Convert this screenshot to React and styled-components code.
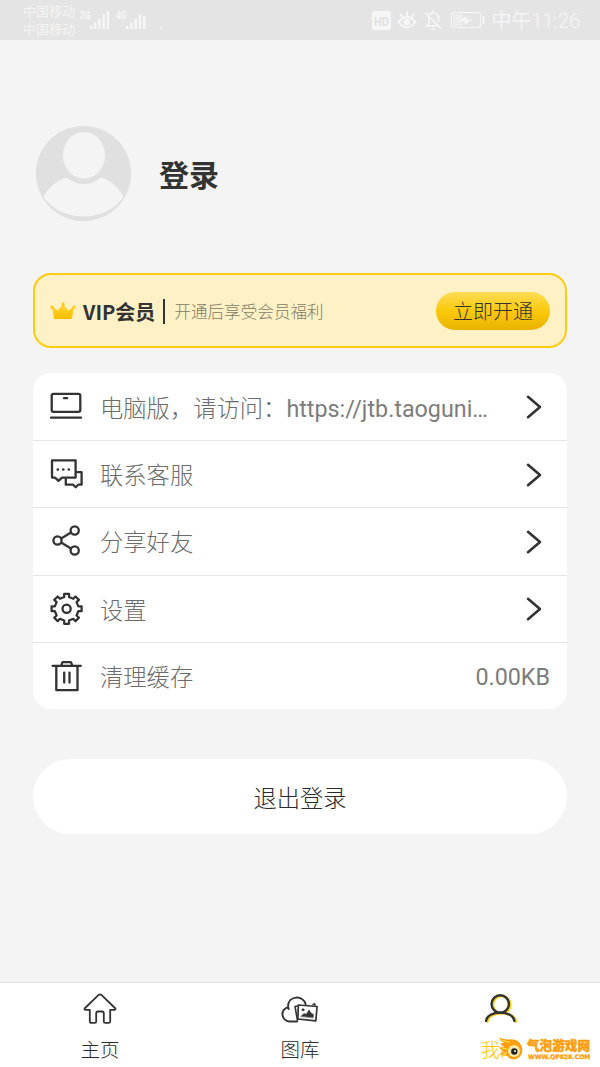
import React from "react";
import styled, { createGlobalStyle } from "styled-components";

const GlobalStyle = createGlobalStyle`
  * {
    box-sizing: border-box;
  }
  body {
    margin: 0;
    background: #f4f4f4;
    font-family: Roboto, "Noto Sans CJK SC", sans-serif;
    color: #333;
  }
`;

const Screen = styled.div`
  position: relative;
  display: flex;
  flex-direction: column;
  width: 600px;
  height: 1067px;
  overflow: hidden;
  background: #f4f4f4;
`;

const StatusBar = styled.header`
  display: flex;
  justify-content: space-between;
  height: 40px;
  padding: 0 20px 0 23px;
  background: #e4e4e4;
  color: #f6f6f6;
`;

const StatusGroup = styled.div`
  display: flex;
  align-items: center;
`;

const Carriers = styled.div`
  width: 57px;
  padding-top: 2px;
  font-size: 13px;
  font-weight: 350;
  line-height: 18px;
  white-space: nowrap;
`;

const Clock = styled.span`
  margin: 2px 0 0 5px;
  font-size: 20px;
  font-weight: 350;
  line-height: 40px;
  white-space: nowrap;
`;

const Content = styled.main`
  display: flex;
  flex: 1;
  flex-direction: column;
  padding: 85px 33px 0;
`;

const Profile = styled.section`
  display: flex;
  align-items: center;
  gap: 27px;
  height: 97px;
  padding-left: 2px;
`;

const LoginTitle = styled.h1`
  margin: 4px 0 0;
  font-size: 30px;
  font-weight: 700;
  line-height: 40px;
`;

const VipBanner = styled.section`
  display: flex;
  align-items: center;
  height: 75px;
  margin-top: 51px;
  padding: 1px 15px 0;
  border: 2px solid #fccb14;
  border-radius: 18px;
  background: #fff1c6;
`;

const VipName = styled.strong`
  margin: 1px 0 0 7px;
  font-family: "Noto Sans CJK SC", sans-serif;
  font-size: 20px;
  line-height: 28px;
  white-space: nowrap;
`;

const VipDivider = styled.span`
  width: 2px;
  height: 25px;
  margin: 0 9px 0 8px;
  background: #333;
`;

const VipHint = styled.span`
  flex: 1;
  margin-top: 3px;
  color: #827b64;
  font-size: 16.6px;
  font-weight: 300;
  line-height: 24px;
`;

const VipButton = styled.button`
  width: 114px;
  height: 38px;
  padding: 3px 0 0;
  border: none;
  border-radius: 19px;
  background: linear-gradient(#ffdc55, #fbc90b 50%, #e9b300);
  color: #333;
  font-family: inherit;
  font-size: 20px;
  font-weight: 300;
  line-height: 35px;
`;

const Menu = styled.ul`
  margin: 25px 0 0;
  padding: 0;
  overflow: hidden;
  border-radius: 18px;
  background: #fff;
  list-style: none;
`;

const MenuRow = styled.li`
  display: flex;
  align-items: center;
  height: 67.2px;
  padding: 0 17px 0 15px;

  & + & {
    border-top: 1px solid #e6e6e6;
  }
`;

const MenuLabel = styled.span`
  flex: 1;
  margin: 4px 0 0 16px;
  color: #6c6c6c;
  font-size: 23.3px;
  font-weight: 300;
  line-height: 34px;
  white-space: nowrap;
`;

const Latin = styled.span`
  color: #7c7c7c;
  font-weight: 400;
`;

const ChevronBox = styled.span`
  display: flex;
  margin: 1px 8px 0 0;
`;

const Value = styled.span`
  margin-top: 2px;
  color: #7c7c7c;
  font-size: 23.3px;
`;

const LogoutButton = styled.button`
  height: 75px;
  margin-top: 50px;
  padding: 2px 0 0;
  border: none;
  border-radius: 38px;
  background: #fff;
  color: #2b2b2b;
  font-family: inherit;
  font-size: 23.3px;
  font-weight: 300;
`;

const TabBar = styled.nav`
  display: grid;
  grid-template-columns: repeat(3, 1fr);
  height: 85px;
  border-top: 1px solid #e2e2e2;
  background: #fff;
`;

const Tab = styled.a`
  display: flex;
  flex-direction: column;
  align-items: center;
  padding-top: 7px;
  color: ${({ $active }) => ($active ? "#fcc800" : "#2b2b2b")};
  font-size: 19.5px;
  font-weight: 300;
  line-height: 28px;
`;

const TabLabel = styled.span`
  margin-top: 11px;
`;

// floats over the bottom right corner of the tab bar
const SiteBadge = styled.div`
  position: absolute;
  right: 9px;
  bottom: 6px;
  display: flex;
  align-items: center;
  color: #ff9d0a;
`;

const SiteText = styled.div`
  width: 64px;
  margin-left: 2px;
`;

const SiteName = styled.div`
  font-size: 12.6px;
  font-weight: 900;
  line-height: 15px;
  white-space: nowrap;
  -webkit-text-stroke: 0.4px #ff9d0a;
`;

const SiteUrl = styled.div`
  width: max-content;
  margin-left: 1px;
  font-family: "DejaVu Sans", sans-serif;
  font-size: 6.1px;
  font-weight: 700;
  line-height: 8px;
  white-space: nowrap;
  -webkit-text-stroke: 0.3px #ff9d0a;
`;

const Line = styled.svg`
  flex: none;
  fill: none;
  stroke: #333;
  stroke-width: ${({ $weight }) => $weight || 2.3};
  stroke-linecap: round;
  stroke-linejoin: round;
`;

const Solid = styled.svg`
  flex: none;
`;

const Icon = ({ children, ...rest }) => (
  <Line width="36" height="36" viewBox="0 0 36 36" {...rest}>
    {children}
  </Line>
);

const LaptopIcon = () => (
  <Icon>
    <rect x="3.7" y="4.8" width="28.6" height="18" rx="1.8" />
    <path d="M16 9.2h3.2M3 28.7h30" />
  </Icon>
);

const ChatIcon = () => (
  <Icon>
    <path d="M4 4.3h23.6v17.3H14l-3.5 3.3L7 21.6H4z" />
    <path d="M28 16.2h5.6v12.5h-3.4l-2.5 2.5-2.5-2.5h-7.4V23" />
    <path d="M9.7 13.5h.2M15.2 13.5h.2M20.7 13.5h.2" strokeWidth="2.5" />
  </Icon>
);

const ShareIcon = () => (
  <Icon>
    <circle cx="26.7" cy="7.5" r="4.1" />
    <circle cx="9.5" cy="17.5" r="4.1" />
    <circle cx="26.7" cy="27.5" r="4.1" />
    <path d="M13.1 15.4l9.900-5.8M13.1 19.6l9.900 5.8" />
  </Icon>
);

// eight teeth, each one given as [angle shift, radius] corners
const gearPoints = () => {
  const tooth = [[-0.2, 12], [-0.16, 15.2], [0.16, 15.2], [0.2, 12]];
  const points = [];
  for (let i = 0; i < 8; i += 1) {
    tooth.forEach(([shift, radius]) => {
      const angle = (i * Math.PI) / 4 + shift;
      points.push(
        `${(18.6 + radius * Math.sin(angle)).toFixed(2)},${(
          17.8 -
          radius * Math.cos(angle)
        ).toFixed(2)}`
      );
    });
  }
  return points.join(" ");
};

const GearIcon = () => (
  <Icon>
    <polygon points={gearPoints()} />
    <circle cx="18.6" cy="17.8" r="4.1" />
  </Icon>
);

const TrashIcon = () => (
  <Icon>
    <path d="M4.6 7.8h28.2M8.3 8v24.2h21.2V8M13.3 7.5l1.2-3.3h8.4l1.4 3.3M16.2 14.6v10M21.5 14.6v10" />
  </Icon>
);

const Chevron = () => (
  <Line width="16" height="26" viewBox="0 0 16 26" $weight={2.6}>
    <path d="M2 2.8L14 13 2 23.2" />
  </Line>
);

const HomeIcon = () => (
  <Icon $weight={1.8}>
    <path d="M16.6 4.9q1.4-1 2.8 0L33.4 18.5q.3 1.3-1 1.4h-4.2v11.6q0 1.4-1.5 1.4h-3.5q-1.4 0-1.4-1.4v-8q0-2-1.6-2h-4.4q-1.6 0-1.6 2v8q0 1.4-1.4 1.4H9.3q-1.5 0-1.5-1.4V19.9H3.6q-1.3-.1-1-1.4z" />
  </Icon>
);

const GalleryIcon = () => (
  <Line width="40" height="36" viewBox="0 0 40 36" $weight={1.9}>
    <path d="M17 31.5H9.300a7.300 7.300 0 0 1-1.200-14.400C7.500 5 23.500 4.800 25.700 14.200M8.100 17.100l.5 2" />
    <path d="M17.500 30.500L15 16.500l2.500-.5M33 14.600l1.500-.8.5 1.200" strokeWidth="1.6" />
    <path d="M18.300 15l18.800 1.500-1.300 14.300-17.900-1.800z" fill="#fff" strokeWidth="1.7" />
    <path d="M21 26.300l3-2.800 2.200.7 2.800-4.300 2.300 3.400 2.200 1.100-.4 3.200z" fill="#333" strokeWidth=".5" />
    <circle cx="23" cy="19.8" r="1" fill="#333" strokeWidth="1" />
  </Line>
);

const MineIcon = () => (
  <Icon $weight={2.4}>
    <g stroke="#fccb14" transform="translate(1.5 .7)">
      <circle cx="18.2" cy="14" r="8.7" />
      <path d="M4 31c.8-11.2 27.6-11.2 28.4 0" />
    </g>
    <circle cx="18.2" cy="14" r="8.7" />
    <path d="M4 31c.8-11.2 27.6-11.2 28.4 0" />
  </Icon>
);

const Avatar = () => (
  <Solid width="97" height="97" viewBox="0 0 97 97">
    <circle cx="48.5" cy="48.5" r="47.6" fill="#e0e0e0" />
    <ellipse cx="49" cy="30.3" rx="21" ry="23.3" fill="#f4f4f4" />
    <path
      d="M8.5 72C12 64 22 55 31.5 52.5Q49 66 66 52.5C76 55 85 64 88.5 72C70 98 27 98 8.5 72z"
      fill="#f4f4f4"
    />
  </Solid>
);

const Crown = () => (
  <Solid width="26" height="18" viewBox="0 0 26 18">
    <defs>
      <linearGradient id="crown" x1="0" y1="0" x2="0" y2="1">
        <stop offset="0" stopColor="#ffd83c" />
        <stop offset="1" stopColor="#fbbd00" />
      </linearGradient>
    </defs>
    <g fill="url(#crown)">
      <path d="M2 5l6 3.2L13 2l5 6.2L24 5l-2 11.2q-.2.8-1 .8H5q-.8 0-1-.8z" />
      <circle cx="2" cy="5" r="1.7" />
      <circle cx="13" cy="2" r="1.7" />
      <circle cx="24" cy="5" r="1.7" />
    </g>
  </Solid>
);

const SignalIcons = () => (
  <Solid width="90" height="40" viewBox="0 0 90 40" fill="#f6f6f6">
    <text x="0" y="19" fontSize="11.5" fontWeight="700" textLength="10.5" lengthAdjust="spacingAndGlyphs">
      2G
    </text>
    <path d="M10 26h2.5v3H10zM14 22.5h2.5V29H14zM18.2 18.5h2.5V29h-2.5zM22.5 14.5H25V29h-2.5zM26.7 11h2.5v18h-2.5z" />
    <text x="36" y="19" fontSize="11.5" fontWeight="700" textLength="10.5" lengthAdjust="spacingAndGlyphs">
      4G
    </text>
    <path d="M46 26h2.5v3H46zM50.2 22.5h2.5V29h-2.5zM54.5 18.5H57V29h-2.5zM58.8 14.5h2.5V29h-2.5zM63 16h2.5v13H63zM80 27h2v1.5h-2z" />
  </Solid>
);

const SystemIcons = () => (
  <Solid width="114" height="40" viewBox="0 0 114 40" fill="none" stroke="#f6f6f6" strokeWidth="2" strokeLinecap="round">
    <rect x="0" y="11" width="19" height="19" rx="2.5" fill="#f6f6f6" stroke="none" />
    <text x="2" y="25.5" fontSize="13.5" fontWeight="700" fill="#e0e0e0" stroke="none" textLength="15" lengthAdjust="spacingAndGlyphs">
      HD
    </text>
    <path d="M26.5 22q8.5-10 17 0-8.5 11-17 0zM35 12.5v3M28.5 14.5l1.5 2M41.5 14.5l-1.5 2" />
    <circle cx="35" cy="22" r="3.2" fill="#f6f6f6" stroke="none" />
    <path d="M53.5 13l15 15M57 17v6.5L54.5 26H64M57.5 14.5q5-4.5 9 2V21M61 11.5v1M60 29h2" strokeWidth="1.7" />
    <rect x="79.5" y="12.5" width="29" height="15" rx="2" strokeWidth="1.2" />
    <path d="M81 14h10v12H81z" fill="#ededed" stroke="none" />
    <path d="M86 20.5l9-4.5-1 3.5h7L92 25l1-4zM110.5 16h2v8h-2z" fill="#f6f6f6" stroke="none" />
  </Solid>
);

const Mascot = () => (
  <Solid width="27" height="24" viewBox="0 0 27 24">
    <path
      d="M1 .5q5 2.6 12 1.8Q21 2.5 23.5 9q2.5 6.5-2 11-4 3.5-8.5 2-3-1.5-5-4.5L1 17.5 5.5 14.5.5 10.5l6-.2L2 6H6Q2.5 4 1 .5z"
      fill="#ff9d0a"
    />
    <path d="M4 3.5l8 2M4 11.5l5 .5M5 16l4-.5" stroke="#ffd43a" strokeWidth="1.3" />
    <circle cx="16" cy="14" r="6" fill="#ffe9a8" />
    <circle cx="16.3" cy="14.5" r="3.2" fill="#222" />
    <circle cx="17" cy="14" r="1" fill="#fff" />
  </Solid>
);

const links = [
  { icon: LaptopIcon, label: "电脑版，请访问：", url: "https://jtb.taoguni…" },
  { icon: ChatIcon, label: "联系客服" },
  { icon: ShareIcon, label: "分享好友" },
  { icon: GearIcon, label: "设置" },
  { icon: TrashIcon, label: "清理缓存", value: "0.00KB" }
];

const tabs = [
  { icon: HomeIcon, label: "主页" },
  { icon: GalleryIcon, label: "图库" },
  { icon: MineIcon, label: "我的", active: true }
];

const MenuItem = ({ icon: ItemIcon, label, url, value }) => (
  <MenuRow>
    <ItemIcon />
    <MenuLabel>
      {label}
      {url && <Latin>{url}</Latin>}
    </MenuLabel>
    {value ? (
      <Value>{value}</Value>
    ) : (
      <ChevronBox>
        <Chevron />
      </ChevronBox>
    )}
  </MenuRow>
);

const App = () => (
  <Screen>
    <GlobalStyle />
    <StatusBar>
      <StatusGroup>
        <Carriers>
          <div>中国移动</div>
          <div>中国移动</div>
        </Carriers>
        <SignalIcons />
      </StatusGroup>
      <StatusGroup>
        <SystemIcons />
        <Clock>中午11:26</Clock>
      </StatusGroup>
    </StatusBar>
    <Content>
      <Profile>
        <Avatar />
        <LoginTitle>登录</LoginTitle>
      </Profile>
      <VipBanner>
        <Crown />
        <VipName>VIP会员</VipName>
        <VipDivider />
        <VipHint>开通后享受会员福利</VipHint>
        <VipButton type="button">立即开通</VipButton>
      </VipBanner>
      <Menu>
        {links.map(link => (
          <MenuItem key={link.label} {...link} />
        ))}
      </Menu>
      <LogoutButton type="button">退出登录</LogoutButton>
    </Content>
    <TabBar>
      {tabs.map(({ icon: TabIcon, label, active }) => (
        <Tab key={label} $active={active}>
          <TabIcon />
          <TabLabel>{label}</TabLabel>
        </Tab>
      ))}
    </TabBar>
    <SiteBadge>
      <Mascot />
      <SiteText>
        <SiteName>气泡游戏网</SiteName>
        <SiteUrl>WWW.QP828.COM</SiteUrl>
      </SiteText>
    </SiteBadge>
  </Screen>
);

export default App;
